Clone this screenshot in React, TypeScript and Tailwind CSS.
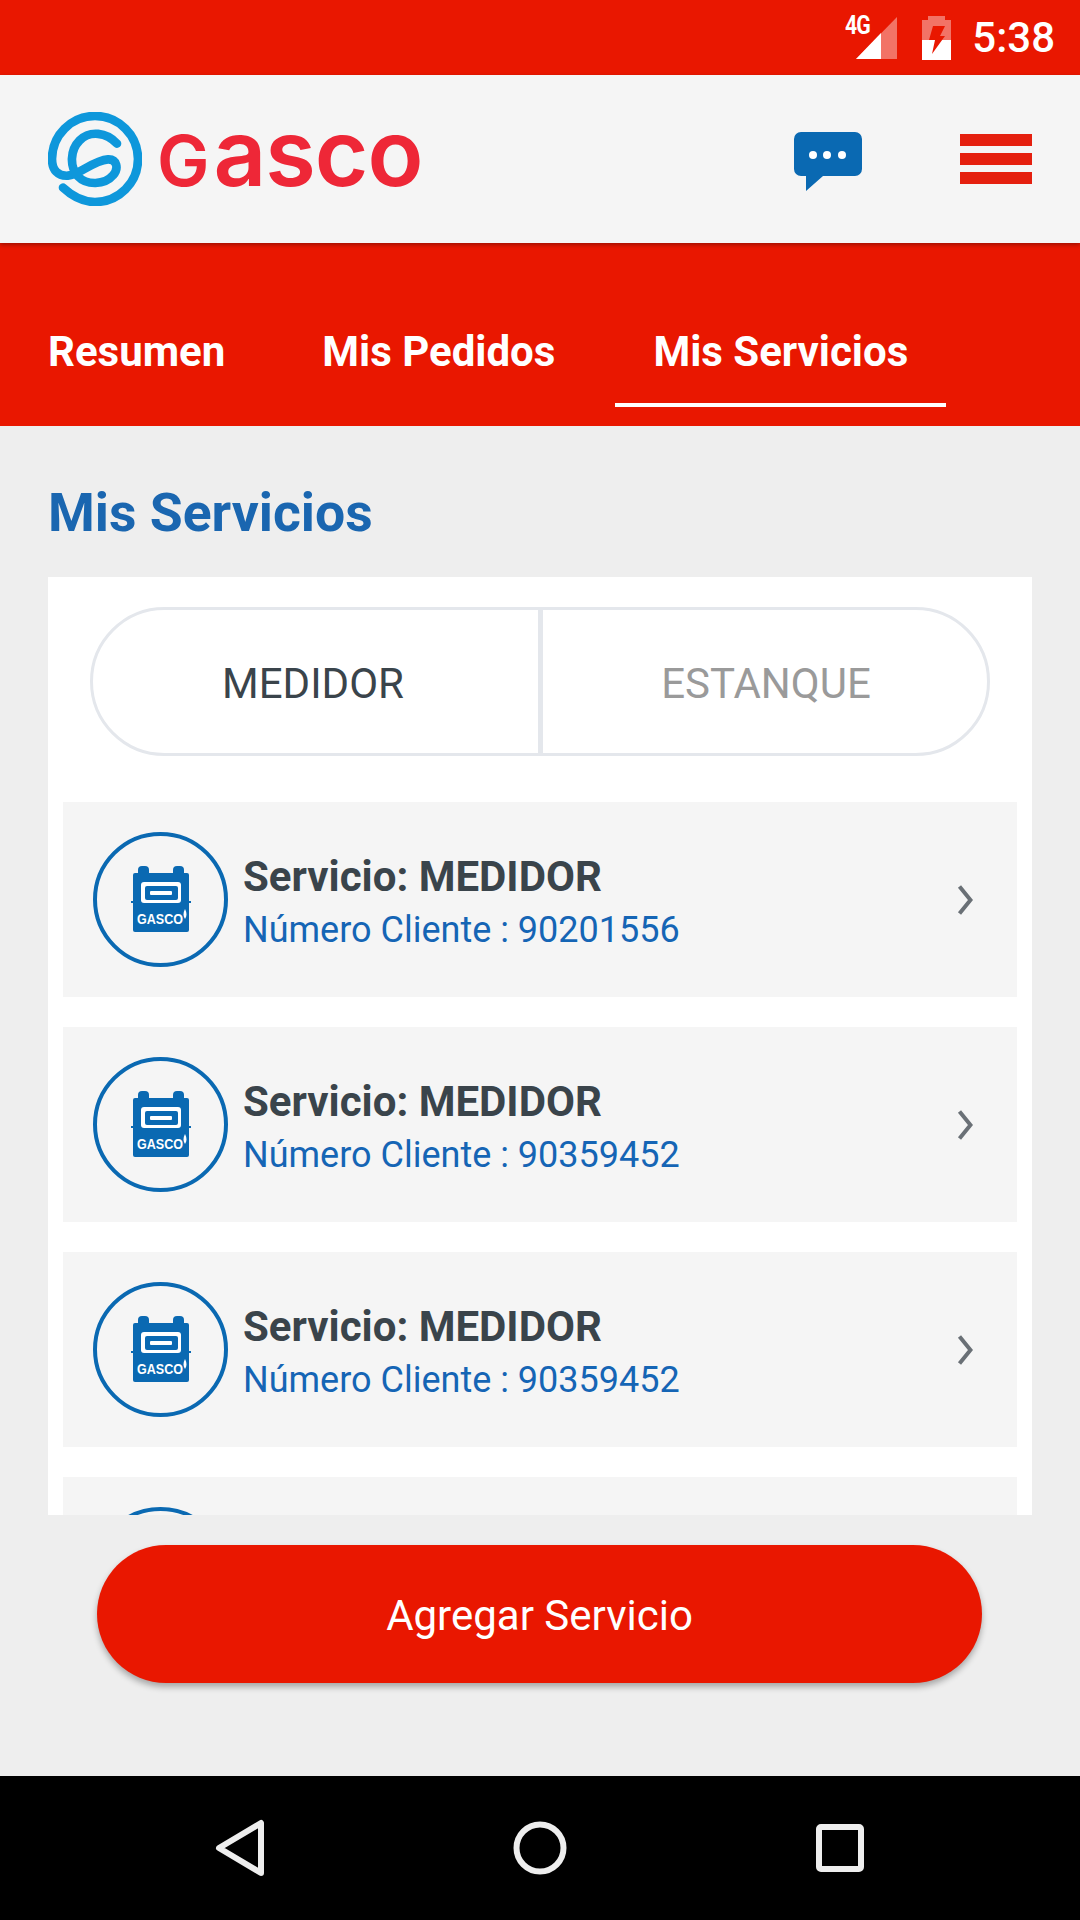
import React from "react";

const font = { fontFamily: "Roboto, sans-serif" };

function Signal() {
  return (
    <svg width="41" height="42" viewBox="0 0 41 42" className="block mr-[25px]">
      <path d="M41 0V42H0Z" fill="#fff" fillOpacity="0.4" />
      <path d="M25 16V42H0Z" fill="#fff" />
    </svg>
  );
}

function Battery() {
  return (
    <svg width="29" height="44" viewBox="0 0 29 44" className="block mr-[21px]">
      <path d="M6 0H23V4H29V24H0V4H6Z" fill="#fff" fillOpacity="0.4" />
      <path d="M0 24H29V44H0Z" fill="#fff" />
      <path d="M11 10H23L18 20H23L10 38L13 24H7Z" fill="#e91700" />
    </svg>
  );
}

function Logo() {
  return (
    <div className="flex items-center">
      <svg width="94" height="94" viewBox="55 65 282 282" className="block">
        <path
          d="M100 292C130 320 165 335 196 335A129 129 0 1 0 67 206C67 240 85 258 115 256C150 254 190 210 235 207C262 206 268 235 250 255C225 285 170 285 145 258C120 230 120 180 150 150C180 120 230 125 262 160"
          fill="none"
          stroke="#0e97db"
          strokeWidth="26"
          strokeLinecap="round"
        />
      </svg>
      <div
        className="ml-[15px] mb-[12px] flex items-baseline text-[#ee2737] font-semibold leading-none"
        style={{ fontFamily: "Inter, sans-serif" }}
      >
        <span className="text-[70px]">G</span>
        <span className="text-[92px] ml-[4px] tracking-[-1px]">asco</span>
      </div>
    </div>
  );
}

function MeterIcon() {
  return (
    <div className="w-[135px] h-[135px] rounded-full border-4 border-[#0a69b2] flex items-center justify-center shrink-0">
      <svg width="64" height="68" viewBox="0 0 64 68" className="block">
        <rect x="9" y="0" width="11" height="12" rx="4" fill="#0a69b2" />
        <rect x="44" y="0" width="11" height="12" rx="4" fill="#0a69b2" />
        <rect x="4" y="7" width="56" height="59" rx="2" fill="#0a69b2" />
        <rect x="2" y="35" width="60" height="2" fill="#0a69b2" />
        <rect x="12" y="16" width="40" height="21" rx="3" fill="#fff" />
        <rect x="16" y="20" width="33" height="14" rx="2" fill="#0a69b2" />
        <rect x="21" y="25" width="22" height="4" rx="1" fill="#fff" />
        <text
          x="8"
          y="58"
          fontSize="14"
          fontWeight="700"
          fill="#fff"
          fontFamily="Liberation Sans, sans-serif"
          textLength="46"
          lengthAdjust="spacingAndGlyphs"
        >
          GASCO
        </text>
        <path d="M56 43C58 47 58 50 56 53C54 50 54 47 56 43Z" fill="#fff" />
      </svg>
    </div>
  );
}

function Row({ num }: { num: string }) {
  return (
    <div className="h-[195px] bg-[#f5f5f5] flex items-center pl-[30px] pr-[44px] shrink-0">
      <MeterIcon />
      <div className="ml-[15px] flex-1 pt-[7px]">
        <div className="text-[42px] leading-[54px] font-bold text-[#3a444b]">Servicio: MEDIDOR</div>
        <div className="text-[36px] leading-[52px] text-[#1565b5]">Número Cliente : {num}</div>
      </div>
      <svg width="16" height="32" viewBox="0 0 16 32" className="block">
        <path d="M2.5 2.5L13.5 16L2.5 29.5" fill="none" stroke="#6a7076" strokeWidth="4" />
      </svg>
    </div>
  );
}

function ClippedRow() {
  return (
    <div className="h-[195px] bg-[#f5f5f5] flex items-center pl-[30px] shrink-0">
      <div className="w-[135px] h-[135px] rounded-full border-4 border-[#0a69b2] shrink-0" />
    </div>
  );
}

export default function App() {
  return (
    <div className="w-[1080px] h-[1920px] flex flex-col bg-[#eeeeee] overflow-hidden" style={font}>
      <div className="h-[75px] bg-[#e91700] flex items-center justify-end relative shrink-0">
        <span className="absolute left-[845px] top-[13px] text-[25px] leading-[26px] font-bold text-white tracking-[-1px] scale-x-[0.85] origin-left">
          4G
        </span>
        <Signal />
        <Battery />
        <span className="text-[42px] font-medium text-white mr-[25px] leading-[75px]">5:38</span>
      </div>

      <div className="h-[168px] bg-[#f5f5f5] flex items-center pl-[48px] pr-[48px] shrink-0 relative z-10 shadow-[0_2px_4px_rgba(0,0,0,0.3)]">
        <Logo />
        <div className="ml-auto mr-[98px] mt-[6px]">
          <svg width="68" height="60" viewBox="0 0 68 60" className="block">
            <path
              d="M7 0H61A7 7 0 0 1 68 7V37A7 7 0 0 1 61 44H29L12 59V44H7A7 7 0 0 1 0 37V7A7 7 0 0 1 7 0Z"
              fill="#0a69b2"
            />
            <circle cx="19" cy="23" r="4" fill="#fff" />
            <circle cx="33" cy="23" r="4" fill="#fff" />
            <circle cx="48" cy="23" r="4" fill="#fff" />
          </svg>
        </div>
        <div className="flex flex-col gap-[7px] w-[72px]">
          <div className="h-[12px] bg-[#e5200f]" />
          <div className="h-[12px] bg-[#e5200f]" />
          <div className="h-[12px] bg-[#e5200f]" />
        </div>
      </div>

      <div className="h-[183px] bg-[#e91700] flex items-start pl-[10px] pt-[84px] shrink-0 text-[42px] leading-[50px] font-bold text-white">
        <div className="px-[38px] h-[77px]">Resumen</div>
        <div className="ml-[21px] px-[38px] h-[77px]">Mis Pedidos</div>
        <div className="ml-[22px] px-[38px] h-[80px] border-b-[4px] border-white">Mis Servicios</div>
      </div>

      <div className="flex-1 flex flex-col px-[48px] min-h-0">
        <h1 className="text-[53.5px] font-bold text-[#1a66b0] leading-[60px] mt-[57px] mb-[34px]">Mis Servicios</h1>
        <div className="h-[938px] bg-white overflow-hidden shrink-0 pt-[30px]">
          <div className="mx-[42px] h-[149px] rounded-full border-[3px] border-[#e4e7ec] flex text-[42px] items-stretch">
            <div className="w-[450px] flex items-center justify-center pt-[3px] pr-[5px] text-[#3a444b] border-r-[5px] border-[#e4e7ec]">
              MEDIDOR
            </div>
            <div className="flex-1 flex items-center justify-center pt-[3px] pl-[2px] text-[#9a9a9a]">ESTANQUE</div>
          </div>
          <div className="mx-[15px] mt-[46px] flex flex-col gap-[30px]">
            <Row num="90201556" />
            <Row num="90359452" />
            <Row num="90359452" />
            <ClippedRow />
          </div>
        </div>
        <button className="mt-[30px] ml-[49px] mr-[50px] h-[138px] rounded-full bg-[#e91700] text-white text-[42px] pt-[3px] shadow-[0_4px_6px_rgba(0,0,0,0.3)] shrink-0">
          Agregar Servicio
        </button>
      </div>

      <div className="h-[144px] bg-black shrink-0">
        <svg width="1080" height="144" viewBox="0 0 1080 144" className="block">
          <path d="M261 47V97L219 72Z" fill="none" stroke="#eeeeee" strokeWidth="6" strokeLinejoin="round" />
          <circle cx="540" cy="72" r="23.5" fill="none" stroke="#eeeeee" strokeWidth="6" />
          <rect x="819" y="51" width="42" height="42" rx="2" fill="none" stroke="#eeeeee" strokeWidth="6" />
        </svg>
      </div>
    </div>
  );
}
